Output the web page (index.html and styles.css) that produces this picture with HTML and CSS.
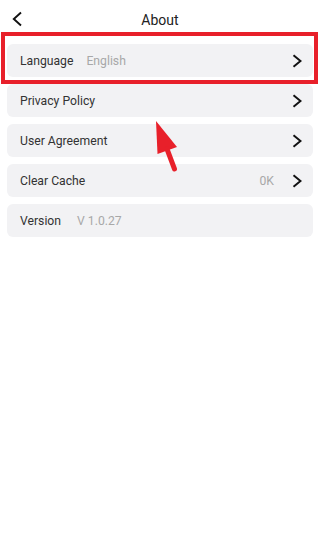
FILE: index.html
```html
<!DOCTYPE html>
<html>
<head>
<meta charset="utf-8">
<link rel="stylesheet" href="styles.css">
</head>
<body>
<div class="page">
  <header class="topbar">
    <svg class="back" width="10" height="16" viewBox="0 0 10 16"><path d="M9 1.5 L1.8 8 L9 14.5" fill="none" stroke="#111" stroke-width="1.9"/></svg>
    <h1 class="title">About</h1>
  </header>
  <ul class="list">
    <li class="row">
      <span class="label">Language</span><span class="value">English</span>
      <span class="spacer"></span>
      <svg class="chev" width="10" height="14" viewBox="0 0 10 14"><path d="M1.5 1.3 L8.5 7 L1.5 12.7" fill="none" stroke="#111" stroke-width="2"/></svg>
    </li>
    <li class="row">
      <span class="label">Privacy Policy</span>
      <span class="spacer"></span>
      <svg class="chev" width="10" height="14" viewBox="0 0 10 14"><path d="M1.5 1.3 L8.5 7 L1.5 12.7" fill="none" stroke="#111" stroke-width="2"/></svg>
    </li>
    <li class="row">
      <span class="label">User Agreement</span>
      <span class="spacer"></span>
      <svg class="chev" width="10" height="14" viewBox="0 0 10 14"><path d="M1.5 1.3 L8.5 7 L1.5 12.7" fill="none" stroke="#111" stroke-width="2"/></svg>
    </li>
    <li class="row">
      <span class="label">Clear Cache</span>
      <span class="spacer"></span>
      <span class="value right">0K</span>
      <svg class="chev" width="10" height="14" viewBox="0 0 10 14"><path d="M1.5 1.3 L8.5 7 L1.5 12.7" fill="none" stroke="#111" stroke-width="2"/></svg>
    </li>
    <li class="row">
      <span class="label">Version</span><span class="value wide">V 1.0.27</span>
    </li>
  </ul>
  <div class="highlight"></div>
  <svg class="arrow" width="30" height="56" viewBox="0 0 30 56"><polygon points="6,1 7.5,34 27,27" fill="#e8202a"/><line x1="17" y1="29" x2="24.5" y2="49" stroke="#e8202a" stroke-width="5" stroke-linecap="round"/></svg>
</div>
</body>
</html>
```
FILE: styles.css
```css
* { box-sizing: border-box; }
html, body { margin: 0; padding: 0; background: #fff; }
body { font-family: Roboto, "Noto Sans", sans-serif; color: #333; }
.page { position: relative; width: 320px; height: 554px; }
.topbar { position: relative; height: 40px; display: flex; align-items: center; justify-content: center; }
.back { position: absolute; left: 12px; top: 11px; }
.title { margin: 0; font-size: 14px; font-weight: 400; color: #222; }
.list { list-style: none; margin: 0; padding: 4px 7px 0; display: flex; flex-direction: column; gap: 7px; }
.row { height: 33px; background: #f2f2f4; border-radius: 6px; display: flex; align-items: center; padding: 0 11px 0 13px; font-size: 12.2px; }
.label { color: #333; }
.value { color: #a8a8a8; margin-left: 13px; }
.value.wide { margin-left: 16px; }
.value.right { margin-left: 0; margin-right: 18px; }
.spacer { flex: 1; }
.chev { display: block; }
.highlight { position: absolute; left: 1px; top: 32px; width: 317px; height: 52px; border: 4px solid #e8202a; }
.arrow { position: absolute; left: 150px; top: 120px; }
```
